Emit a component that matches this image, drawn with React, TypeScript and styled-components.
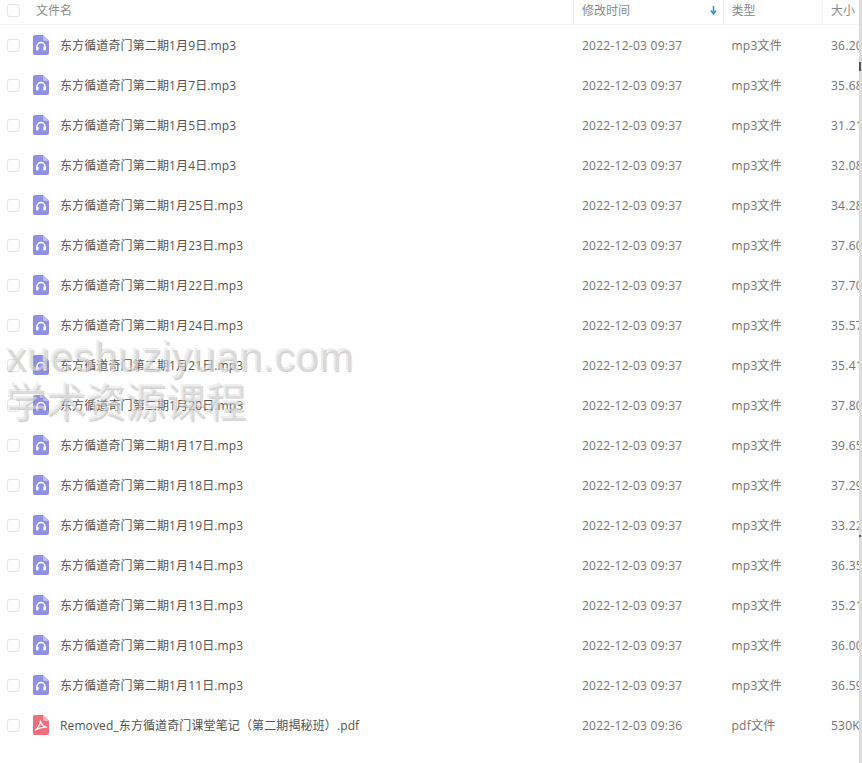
import React from 'react';
import styled, { createGlobalStyle } from 'styled-components';

interface FileRow {
  name: string;
  time: string;
  type: string;
  size: string;
  kind: 'audio' | 'pdf';
}

const prefix = '东方循道奇门第二期1月';

const audio = (day: string, size: string): FileRow => ({
  name: `${prefix}${day}日.mp3`,
  time: '2022-12-03 09:37',
  type: 'mp3文件',
  size,
  kind: 'audio',
});

const rows: FileRow[] = [
  audio('9', '36.20M'),
  audio('7', '35.68M'),
  audio('5', '31.21M'),
  audio('4', '32.08M'),
  audio('25', '34.28M'),
  audio('23', '37.60M'),
  audio('22', '37.70M'),
  audio('24', '35.57M'),
  audio('21', '35.41M'),
  audio('20', '37.80M'),
  audio('17', '39.65M'),
  audio('18', '37.29M'),
  audio('19', '33.22M'),
  audio('14', '36.35M'),
  audio('13', '35.21M'),
  audio('10', '36.00M'),
  audio('11', '36.59M'),
  {
    name: 'Removed_东方循道奇门课堂笔记（第二期揭秘班）.pdf',
    time: '2022-12-03 09:36',
    type: 'pdf文件',
    size: '530KB',
    kind: 'pdf',
  },
];

const GlobalStyle = createGlobalStyle`
  html, body {
    margin: 0;
    padding: 0;
    background: #fff;
    overflow: hidden;
  }
  body {
    font-family: "Open Sans", "Noto Sans CJK SC", sans-serif;
    font-size: 12px;
  }
`;

const Page = styled.div`
  position: relative;
  width: 862px;
  height: 763px;
  overflow: hidden;
  background: #fff;
`;

const Grid = styled.div`
  display: grid;
  grid-template-columns: 582px 149.500px 99.500px 28px;
`;

const Header = styled(Grid)`
  height: 24px;
  border-bottom: 1px solid #f4f4f6;
  color: #8a8a8a;
`;

const HeadCell = styled.div`
  display: flex;
  align-items: center;
  justify-content: space-between;
  height: 24px;
  padding-bottom: 6px;
  box-sizing: border-box;
  padding-top: 2px;
  white-space: nowrap;
  overflow: hidden;
`;

const DividedHead = styled(HeadCell)`
  border-right: 1px solid #f1f1f3;
  margin-right: 8px;
  padding-right: 6px;
`;

const NameHead = styled(DividedHead)`
  justify-content: flex-start;
  gap: 16px;
  padding-left: 7px;
`;

const Row = styled(Grid)`
  height: 40px;
  align-items: center;
  color: #747474;
`;

const NameCell = styled.div`
  display: flex;
  align-items: center;
  padding-left: 7px;
  color: #525252;
  letter-spacing: 0.12px;
  white-space: nowrap;
`;

const Check = styled.span`
  flex: none;
  width: 11px;
  height: 11px;
  border: 1px solid #e4e4e8;
  border-radius: 3px;
  background: #fff;
`;

const IconSlot = styled.span`
  flex: none;
  display: flex;
  margin-left: 13px;
  margin-right: 11px;
`;

const Cell = styled.div`
  letter-spacing: 0.26px;
  white-space: nowrap;
  overflow: hidden;
`;

const Scrollbar = styled.div`
  position: absolute;
  top: 0;
  right: 0;
  width: 3px;
  height: 100%;
  background: #dcdcdc;
`;

const ScrollTick = styled.span<{ $top: number; $height: number }>`
  position: absolute;
  left: 0;
  top: ${p => p.$top}px;
  width: 2px;
  height: ${p => p.$height}px;
  background: #555;
`;

const Watermark = styled.div`
  position: absolute;
  left: 6px;
  top: 334px;
  color: rgba(255, 255, 255, 0.4);
  text-shadow: 1px 1px 1px rgba(130, 130, 130, 0.42), -1px -1px 0 rgba(205, 205, 205, 0.35);
  pointer-events: none;
  white-space: nowrap;
`;

const MarkLine = styled.div<{ $size: number; $spacing: number; $height: number }>`
  font-family: "Liberation Sans", "Noto Sans CJK SC", sans-serif;
  font-size: ${p => p.$size}px;
  line-height: ${p => p.$height}px;
  letter-spacing: ${p => p.$spacing}px;
`;

const AudioIcon = () => (
  <svg width="16" height="20" viewBox="0 0 16 20">
    <path d="M2 0h8l6 6v12a2 2 0 0 1-2 2H2a2 2 0 0 1-2-2V2a2 2 0 0 1 2-2z" fill="#8f8fe4" />
    <path d="M10 0l6 6h-4.500A1.500 1.500 0 0 1 10 4.500z" fill="#bcbcf2" />
    <path d="M4 14.500v-3a4 4 0 0 1 8 0v3" fill="none" stroke="#fff" strokeWidth="1.500" />
    <rect x="3.200" y="11.500" width="2.400" height="4" rx="1" fill="#fff" />
    <rect x="10.400" y="11.500" width="2.400" height="4" rx="1" fill="#fff" />
  </svg>
);

const PdfIcon = () => (
  <svg width="16" height="20" viewBox="0 0 16 20">
    <path d="M2 0h8l6 6v12a2 2 0 0 1-2 2H2a2 2 0 0 1-2-2V2a2 2 0 0 1 2-2z" fill="#ee6f7c" />
    <path d="M10 0l6 6h-4.500A1.500 1.500 0 0 1 10 4.500z" fill="#f7b2b8" />
    <path
      d="M7.500 6c-.3 3-2 6.500-5 9 2.500-1.500 6.500-3 11-2.800-3-.6-5.300-3-6-6.200z"
      fill="none"
      stroke="#fff"
      strokeWidth="1.200"
      strokeLinejoin="round"
    />
  </svg>
);

const SortArrow = () => (
  <svg width="7" height="9" viewBox="0 0 7 9">
    <path d="M3.500 0v7M1 4.500l2.500 3.500 2.500-3.500" fill="none" stroke="#2f9be8" strokeWidth="1.600" />
  </svg>
);

export default function App() {
  return (
    <Page>
      <GlobalStyle />
      <Header>
        <NameHead>
          <Check />
          <span>文件名</span>
        </NameHead>
        <DividedHead>
          <span>修改时间</span>
          <SortArrow />
        </DividedHead>
        <DividedHead>类型</DividedHead>
        <HeadCell>大小</HeadCell>
      </Header>
      {rows.map(row => (
        <Row key={row.name}>
          <NameCell>
            <Check />
            <IconSlot>{row.kind === 'audio' ? <AudioIcon /> : <PdfIcon />}</IconSlot>
            {row.name}
          </NameCell>
          <Cell>{row.time}</Cell>
          <Cell>{row.type}</Cell>
          <Cell>{row.size}</Cell>
        </Row>
      ))}
      <Watermark>
        <MarkLine $size={41} $spacing={0.5} $height={46}>xueshuziyuan.com</MarkLine>
        <MarkLine $size={40} $spacing={0} $height={46}>学术资源课程</MarkLine>
      </Watermark>
      <Scrollbar>
        <ScrollTick $top={62} $height={9} />
        <ScrollTick $top={535} $height={2} />
      </Scrollbar>
    </Page>
  );
}
